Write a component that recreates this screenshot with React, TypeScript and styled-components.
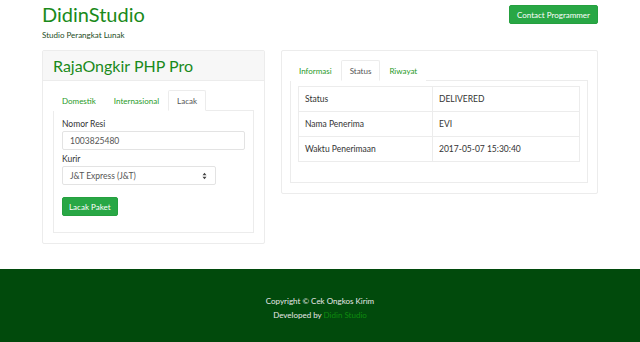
import styled, { createGlobalStyle } from "styled-components";

const GlobalStyle = createGlobalStyle`
  html, body {
    margin: 0;
    padding: 0;
    background: #fff;
  }
  body {
    font-family: Lato, "Open Sans", sans-serif;
    font-size: 9px;
    color: #333;
  }
  * {
    box-sizing: border-box;
  }
`;

const Page = styled.div`
  min-height: 342px;
  display: flex;
  flex-direction: column;
`;

const Container = styled.div`
  width: 556px;
  margin: 0 auto;
  flex: 1;
`;

const Header = styled.header`
  display: flex;
  justify-content: space-between;
  align-items: flex-start;
  padding-top: 2px;
  height: 50px;
`;

const Brand = styled.div`
  display: flex;
  flex-direction: column;
`;

const BrandName = styled.h1`
  margin: 0;
  font-size: 20px;
  font-weight: 400;
  color: #1a8a1a;
  line-height: 24px;
`;

const Tagline = styled.span`
  margin-top: 4px;
  font-size: 8px;
  color: #1d4d1d;
`;

const GreenButton = styled.button`
  background: #28a745;
  border: 1px solid #25a03f;
  border-radius: 2px;
  color: #fff;
  font-family: inherit;
  font-size: 8px;
  padding: 0 6px;
  height: 19px;
  cursor: pointer;
`;

const ContactButton = styled(GreenButton)`
  margin-top: 3px;
  padding: 0 7px;
`;

const Columns = styled.div`
  display: flex;
  gap: 16px;
  align-items: flex-start;
`;

const Card = styled.div<{ $width: number }>`
  width: ${(p) => p.$width}px;
  border: 1px solid #ececec;
  border-radius: 2px;
  background: #fff;
`;

const CardHead = styled.div`
  background: #f7f7f7;
  border-bottom: 1px solid #ececec;
  height: 30px;
  display: flex;
  align-items: center;
  padding-left: 10px;
`;

const CardTitle = styled.h2`
  margin: 0;
  font-size: 16px;
  font-weight: 400;
  color: #1a8a1a;
`;

const CardBody = styled.div<{ $pad: string }>`
  padding: ${(p) => p.$pad};
`;

const Tabs = styled.ul`
  list-style: none;
  margin: 0;
  padding: 0;
  display: flex;
  height: 21px;
  border-bottom: 1px solid #ececec;
`;

const Tab = styled.li<{ $active?: boolean }>`
  height: 21px;
  padding: 0 8px;
  display: flex;
  align-items: center;
  font-size: 8px;
  color: ${(p) => (p.$active ? "#555" : "#1f9a1f")};
  border: 1px solid ${(p) => (p.$active ? "#ececec" : "transparent")};
  border-bottom: ${(p) => (p.$active ? "1px solid #fff" : "none")};
  border-radius: 2px 2px 0 0;
  background: #fff;
  margin-bottom: -1px;
`;

const TabPane = styled.div<{ $pad: string; $height: number }>`
  border: 1px solid #ececec;
  border-top: none;
  padding: ${(p) => p.$pad};
  height: ${(p) => p.$height}px;
`;

const Label = styled.label`
  display: block;
  font-size: 8.5px;
  color: #333;
  margin-bottom: 2px;
`;

const Field = styled.div`
  height: 19px;
  border: 1px solid #e3e3e3;
  border-radius: 2px;
  display: flex;
  align-items: center;
  justify-content: space-between;
  padding: 0 8px 0 7px;
  font-size: 8.5px;
  color: #555;
  margin-bottom: 4px;
`;

const SelectField = styled(Field)`
  width: 154px;
  margin-bottom: 12px;
`;

const SubmitButton = styled(GreenButton)`
  height: 19px;
  padding: 0 6px;
`;

const Table = styled.table`
  width: 100%;
  border-collapse: collapse;
`;

const Cell = styled.td<{ $w?: number }>`
  border: 1px solid #ececec;
  height: 25px;
  padding: 0 6px;
  font-size: 8.5px;
  color: #333;
  width: ${(p) => (p.$w ? `${p.$w}px` : "auto")};
`;

const Footer = styled.footer`
  height: 73px;
  background: #014a0c;
  display: flex;
  flex-direction: column;
  align-items: center;
  justify-content: center;
  gap: 4px;
  padding-top: 4px;
  color: #e8e8e8;
  font-size: 8px;
`;

const FooterLink = styled.a`
  color: #0f8a0f;
  text-decoration: none;
`;

function SortArrows() {
  return (
    <svg width="5" height="8" viewBox="0 0 5 8">
      <path d="M0.5 3.2 L2.5 0.8 L4.5 3.2 Z M0.5 4.8 L2.5 7.2 L4.5 4.8 Z" fill="#444" />
    </svg>
  );
}

export default function App() {
  const rows = [
    ["Status", "DELIVERED"],
    ["Nama Penerima", "EVI"],
    ["Waktu Penerimaan", "2017-05-07 15:30:40"],
  ];

  return (
    <Page>
      <GlobalStyle />
      <Container>
        <Header>
          <Brand>
            <BrandName>DidinStudio</BrandName>
            <Tagline>Studio Perangkat Lunak</Tagline>
          </Brand>
          <ContactButton>Contact Programmer</ContactButton>
        </Header>
        <Columns>
          <Card $width={223}>
            <CardHead>
              <CardTitle>RajaOngkir PHP Pro</CardTitle>
            </CardHead>
            <CardBody $pad="9px 10px 10px">
              <Tabs>
                <Tab>Domestik</Tab>
                <Tab>Internasional</Tab>
                <Tab $active>Lacak</Tab>
              </Tabs>
              <TabPane $pad="8px 8px" $height={122}>
                <Label>Nomor Resi</Label>
                <Field>1003825480</Field>
                <Label>Kurir</Label>
                <SelectField>
                  J&amp;T Express (J&amp;T)
                  <SortArrows />
                </SelectField>
                <SubmitButton>Lacak Paket</SubmitButton>
              </TabPane>
            </CardBody>
          </Card>
          <Card $width={317}>
            <CardBody $pad="9px 9px 10px 8px">
              <Tabs>
                <Tab>Informasi</Tab>
                <Tab $active>Status</Tab>
                <Tab>Riwayat</Tab>
              </Tabs>
              <TabPane $pad="5px 7px" $height={102}>
                <Table>
                  <tbody>
                    {rows.map(([k, v]) => (
                      <tr key={k}>
                        <Cell $w={134}>{k}</Cell>
                        <Cell>{v}</Cell>
                      </tr>
                    ))}
                  </tbody>
                </Table>
              </TabPane>
            </CardBody>
          </Card>
        </Columns>
      </Container>
      <Footer>
        <span>Copyright © Cek Ongkos Kirim</span>
        <span>
          Developed by <FooterLink href="#">Didin Studio</FooterLink>
        </span>
      </Footer>
    </Page>
  );
}
